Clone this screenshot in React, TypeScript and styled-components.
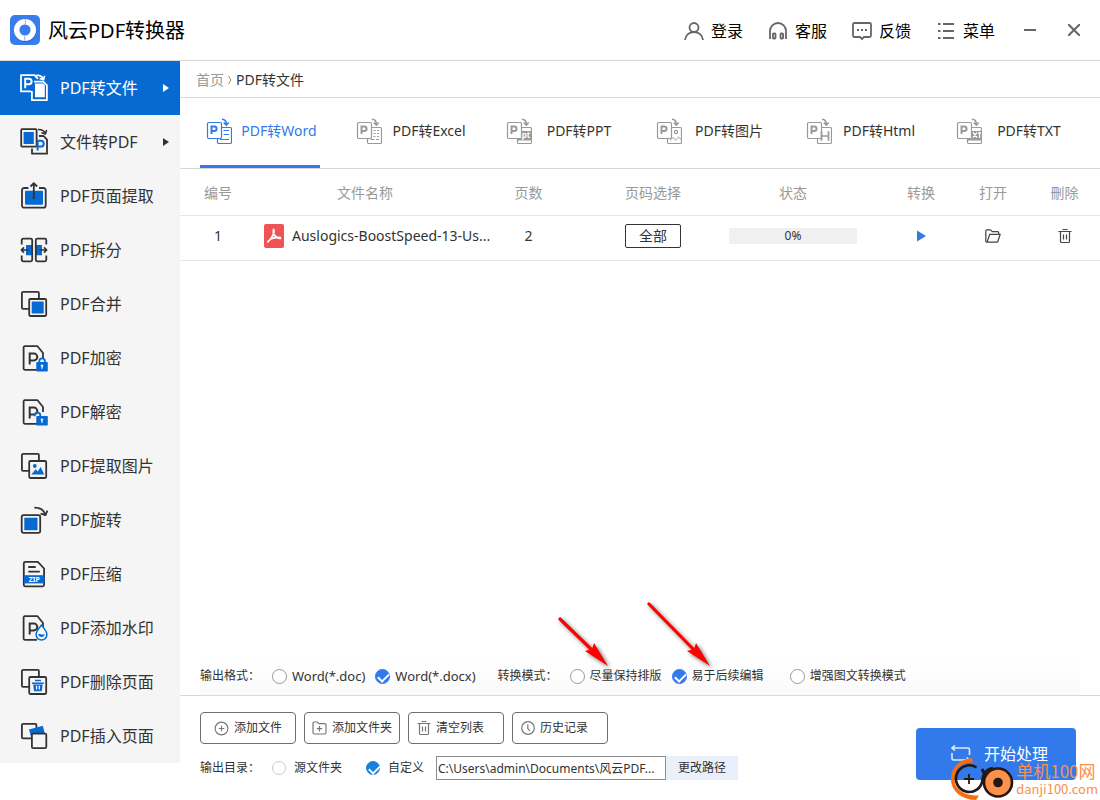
import React from "react";
import styled, { createGlobalStyle } from "styled-components";

const BLUE = "#327aeb";
const DEEP = "#066ad2";
const INK = "#333333";
const SIDE = "#f5f5f5";
const LINE = "#d9d9d9";

const Global = createGlobalStyle`
  * { box-sizing: border-box; }
  body {
    margin: 0;
    background: #fff;
    color: ${INK};
    font-family: "Noto Sans", "Noto Sans CJK SC", sans-serif;
    font-size: 14px;
    line-height: 20px;
  }
  button, input { font: inherit; color: inherit; }
  button { background: none; border: 0; padding: 0; cursor: pointer; }
  svg { display: block; flex: none; }
`;

const Window = styled.div`
  position: relative;
  min-height: 100vh;
  display: flex;
  flex-direction: column;
  overflow: hidden;
`;

const Header = styled.header`
  display: flex;
  align-items: center;
  height: 61px;
  padding: 0 4px 0 10px;
  border-bottom: 1px solid ${LINE};
`;

const Title = styled.h1`
  margin: 0 auto 0 8px;
  padding-top: 2px;
  font-size: 20px;
  font-weight: 400;
  line-height: 28px;
  color: #000;
`;

const HeaderNav = styled.nav`
  display: flex;
  gap: 25px;
  margin-right: 13px;
  padding-top: 2px;
`;

const HeaderButton = styled.button`
  display: flex;
  align-items: center;
  gap: 7px;
  font-size: 16px;
  line-height: 24px;
  color: #000;
`;

const WindowButton = styled.button`
  display: flex;
  align-items: center;
  justify-content: center;
  width: 44px;
  height: 40px;
`;

const Body = styled.div`
  flex: 1;
  display: flex;
  align-items: stretch;
`;

const Sidebar = styled.nav`
  align-self: flex-start;
  width: 180px;
  flex: none;
  background: ${SIDE};
`;

const SideItem = styled.button<{ $active?: boolean }>`
  display: flex;
  align-items: center;
  gap: 12px;
  width: 100%;
  height: 54px;
  padding: 0 11px 0 20px;
  font-size: 16px;
  line-height: 24px;
  text-align: left;
  color: ${(p) => (p.$active ? "#fff" : INK)};
  background: ${(p) => (p.$active ? DEEP : "transparent")};
`;

const SideLabel = styled.span`
  flex: 1;
  white-space: nowrap;
`;

const Main = styled.main`
  flex: 1;
  min-width: 0;
  display: flex;
  flex-direction: column;
`;

const Breadcrumb = styled.nav`
  display: flex;
  align-items: center;
  gap: 4px;
  height: 37px;
  padding: 1px 16px 0;
  border-bottom: 1px solid ${LINE};
`;

const CrumbLink = styled.a`
  color: #999;
  text-decoration: none;
`;

const Tabs = styled.div`
  display: flex;
  gap: 30px;
  height: 71px;
  padding: 0 20px;
  border-bottom: 1px solid ${LINE};
`;

const Tab = styled.button<{ $active?: boolean }>`
  display: flex;
  align-items: center;
  gap: 6px;
  width: 120px;
  flex: none;
  padding: 0 0 1px 6px;
  border-bottom: 3px solid ${(p) => (p.$active ? BLUE : "transparent")};
  color: ${(p) => (p.$active ? BLUE : INK)};
`;

const TabLabel = styled.span`
  flex: 1;
  text-align: center;
  white-space: nowrap;
`;

const FileTable = styled.table`
  width: 100%;
  table-layout: fixed;
  border-collapse: separate;
  border-spacing: 0;
`;

const HeadCell = styled.th<{ $w?: number; $pl?: number; $pr?: number }>`
  width: ${(p) => (p.$w ? `${p.$w}px` : "auto")};
  height: 47px;
  padding: 2px ${(p) => p.$pr ?? 0}px 0 ${(p) => p.$pl ?? 0}px;
  border-bottom: 1px solid #e6e6e6;
  font-weight: 400;
  color: #999;
`;

const Cell = styled.td<{ $pl?: number; $pr?: number }>`
  height: 45px;
  padding: 0 ${(p) => p.$pr ?? 0}px 4px ${(p) => p.$pl ?? 0}px;
  border-bottom: 1px solid #e6e6e6;
  text-align: center;
`;

const FileName = styled.div`
  display: flex;
  align-items: center;
  gap: 8px;
  white-space: nowrap;
`;

const RangeButton = styled.button`
  display: block;
  width: 56px;
  height: 24px;
  margin: 0 auto;
  border: 1px solid ${INK};
  border-radius: 2px;
  line-height: 20px;
`;

const Progress = styled.div`
  width: 128px;
  height: 16px;
  margin: 0 auto;
  border-radius: 2px;
  background: #f0f0f0;
  font-size: 12px;
  line-height: 16px;
`;

const IconButton = styled.button`
  display: block;
  margin: 0 auto;
`;

const Options = styled.div`
  display: flex;
  align-items: center;
  height: 40px;
  margin: auto 20px 0;
  padding-top: 2px;
  background: linear-gradient(#fff, #fafafa);
  font-size: 12px;
`;

const OptionGroup = styled.div<{ $after: number }>`
  display: flex;
  align-items: center;
  gap: 10px;
  margin-right: ${(p) => p.$after}px;
`;

const GroupLabel = styled.span`
  width: 62px;
  white-space: nowrap;
`;

const Option = styled.label`
  position: relative;
  display: flex;
  align-items: center;
  gap: 5px;
  white-space: nowrap;
`;

const Radio = styled.input<{ $size: number; $tone: string; $ring: string }>`
  appearance: none;
  position: relative;
  flex: none;
  width: ${(p) => p.$size}px;
  height: ${(p) => p.$size}px;
  margin: 0;
  border: 1px solid ${(p) => p.$ring};
  border-radius: 50%;
  background: #fff;
  &:checked {
    border-color: ${(p) => p.$tone};
    background: ${(p) => p.$tone};
  }
  &:checked::after {
    content: "";
    position: absolute;
    left: 2px;
    top: 3px;
    width: 9px;
    height: 5px;
    border-left: 2px solid #fff;
    border-bottom: 2px solid #fff;
    transform: rotate(-45deg);
  }
`;

const Latin = styled.span`
  font-size: 13px;
`;

const Arrow = styled.svg`
  position: absolute;
  right: 54px;
  bottom: 20px;
  pointer-events: none;
  overflow: visible;
  filter: drop-shadow(2px 2px 2px rgba(0, 0, 0, 0.55));
`;

const Footer = styled.footer`
  display: flex;
  align-items: flex-start;
  justify-content: space-between;
  height: 105px;
  padding: 16px 24px 20px 20px;
  border-top: 1px solid ${LINE};
  font-size: 12px;
`;

const FooterRow = styled.div`
  display: flex;
  align-items: center;
  gap: 8px;
  margin-bottom: 12px;
`;

const ToolButton = styled.button<{ $start?: boolean }>`
  display: flex;
  align-items: center;
  justify-content: ${(p) => (p.$start ? "flex-start" : "center")};
  gap: 5px;
  width: 96px;
  height: 32px;
  padding: 0 ${(p) => (p.$start ? 8 : 0)}px;
  border: 1px solid #707070;
  border-radius: 4px;
  white-space: nowrap;
`;

const DirRow = styled.div`
  display: flex;
  align-items: center;
  height: 24px;
`;

const DirLabel = styled.span`
  width: 72px;
  white-space: nowrap;
`;

const DirOption = styled.label<{ $w: number }>`
  display: flex;
  align-items: center;
  gap: 8px;
  width: ${(p) => p.$w}px;
  white-space: nowrap;
`;

const PathInput = styled.input`
  width: 230px;
  height: 24px;
  padding: 0 1px;
  border: 1px solid #8c8c8c;
  background: #fff;
`;

const PathButton = styled.button`
  width: 72px;
  height: 24px;
  background: #e9f0fc;
`;

const StartButton = styled.button`
  display: flex;
  align-items: center;
  gap: 13px;
  width: 160px;
  height: 52px;
  margin-top: 16px;
  padding-left: 35px;
  border-radius: 4px;
  background: ${BLUE};
  color: #fff;
  font-size: 16px;
  line-height: 24px;
`;

const Watermark = styled.div`
  position: absolute;
  right: 2px;
  bottom: 0;
  display: flex;
  align-items: center;
  gap: 1px;
  color: #f9904d;
  font-family: "Noto Sans CJK SC", sans-serif;
  pointer-events: none;
`;

const WatermarkText = styled.div`
  display: flex;
  flex-direction: column;
  padding-bottom: 1px;
  font-size: 13px;
  line-height: 16px;
`;

const WatermarkName = styled.span`
  font-size: 17px;
  line-height: 20px;
`;

/* ---------- sidebar icons, 28 x 28 ---------- */

const Side = ({ children, color = INK }: { children: React.ReactNode; color?: string }) => (
  <svg width="28" height="28" viewBox="0 0 28 28" fill="none" stroke={color} strokeWidth="1.8" strokeLinejoin="round" aria-hidden="true">
    {children}
  </svg>
);

const BackSheet = () => <rect x="1.9" y="1.9" width="17" height="17" rx="1.2" />;
const FrontSheet = () => <rect x="9.2" y="9" width="17" height="17" rx="1.2" fill={SIDE} />;
const Paper = () => <path d="M23 14V9L17.5 2.2H4.8a1.2 1.2 0 0 0-1.2 1.2v21.2a1.2 1.2 0 0 0 1.2 1.2H17" />;
const LetterP = () => <path d="M9.7 20.4V9.6h4.2a3.4 3.4 0 0 1 0 6.8H9.7" strokeWidth="2" strokeLinejoin="miter" />;

const sideIcons: Record<string, React.ReactNode> = {
  toFile: (
    <Side color="#fff">
      <path d="M11 17.4H1V1.2h13.5l3.4 3.6" />
      <path d="M5.2 14.3V4.7h3.6a2.7 2.7 0 0 1 0 5.6H5.2" strokeWidth="2" strokeLinejoin="miter" />
      <path d="M16 1.5c3.5-.4 6 .8 7.2 3.4M19.6 4.6l4 1.2 1-4" strokeWidth="1.6" />
      <path d="M11.9 17v9.2h15V11.4l-3.6-3.7H14" />
      <path d="M15 9.5h8.2l1.6 1.8v12H15z" fill="#fff" stroke="none" />
    </Side>
  ),
  fromFile: (
    <Side>
      <rect x="1.2" y="1.2" width="15.4" height="17.4" rx="1" />
      <rect x="3.6" y="4" width="10.2" height="12" fill={DEEP} stroke="none" />
      <path d="M18 1.5c3.5-.2 5.8 1 7 3.4M21.4 4.8l4 1.2 1.2-4" strokeWidth="1.6" />
      <path d="M12 20.5v5.2h15V11.6L23.6 8H19" />
      <path d="M17.6 22.6v-9.8h3.2a2.9 2.9 0 0 1 0 5.8h-3.2" stroke={DEEP} strokeWidth="2" strokeLinejoin="miter" />
    </Side>
  ),
  extract: (
    <Side>
      <rect x="5" y="8.7" width="18" height="14" rx="1" fill={DEEP} stroke="none" />
      <path d="M8.5 6H4.2A2.2 2.2 0 0 0 2 8.2v15.3a2.2 2.2 0 0 0 2.2 2.2h19.3a2.2 2.2 0 0 0 2.2-2.2V8.2A2.2 2.2 0 0 0 23.5 6H19M13.8 17V1.5M10.5 4.5l3.3-3.3 3.3 3.3" />
    </Side>
  ),
  split: (
    <Side>
      <path d="M6 9h6v10.2H6zM15.5 9H22v10.2h-6.5z" fill={DEEP} stroke="none" />
      <path d="M1.7 8.5V4.2a1.5 1.5 0 0 1 1.5-1.5h7.5a1.5 1.5 0 0 1 1.5 1.5v19.6a1.5 1.5 0 0 1-1.5 1.5H3.2a1.5 1.5 0 0 1-1.5-1.5v-4.3M26.3 8.5V4.2a1.5 1.5 0 0 0-1.5-1.5h-7.5a1.5 1.5 0 0 0-1.5 1.5v19.6a1.5 1.5 0 0 0 1.5 1.5h7.5a1.5 1.5 0 0 0 1.5-1.5v-4.3" />
      <path d="M8.5 14H1.5M4 11.3L1.3 14 4 16.7M19.5 14h7M24 11.3l2.7 2.7-2.7 2.7" strokeWidth="1.7" />
    </Side>
  ),
  merge: (
    <Side>
      <BackSheet />
      <FrontSheet />
      <rect x="11.7" y="11.5" width="12" height="12" fill={DEEP} stroke="none" />
    </Side>
  ),
  lock: (
    <Side>
      <Paper />
      <LetterP />
      <rect x="16.3" y="18" width="11.5" height="9.5" rx=".8" fill={DEEP} stroke="none" />
      <path d="M19.3 18.5v-1.3a2.8 2.8 0 0 1 5.6 0v1.3" stroke={DEEP} />
      <path d="M22 20.7v4M20.8 21.5h2.4" stroke="#fff" strokeWidth="1.3" />
    </Side>
  ),
  unlock: (
    <Side>
      <Paper />
      <LetterP />
      <rect x="16.3" y="18" width="11.5" height="9.5" rx=".8" fill={DEEP} stroke="none" />
      <path d="M14.7 18.2v-.8a2.8 2.8 0 0 1 5.6 0v1.3" stroke={DEEP} />
      <path d="M22 20.7v4M20.8 21.5h2.4" stroke="#fff" strokeWidth="1.3" />
    </Side>
  ),
  image: (
    <Side>
      <BackSheet />
      <FrontSheet />
      <circle cx="14.8" cy="14" r="1.9" fill={DEEP} stroke="none" />
      <path d="M11.3 22.5l4.4-5.3 2 2.2 3-4.4 3.6 7.5z" fill={DEEP} stroke="none" />
    </Side>
  ),
  rotate: (
    <Side>
      <rect x="1.7" y="9.2" width="18.5" height="17.6" rx="1.8" />
      <rect x="4.3" y="11.7" width="13.2" height="12.5" fill={DEEP} stroke="none" />
      <path d="M14.3 1.7c5 0 9.5 1.8 10.8 6.8M20.5 7.7l5 1.5L27.5 4.5" />
    </Side>
  ),
  zip: (
    <Side>
      <path d="M3.8 15V3.4a1.5 1.5 0 0 1 1.5-1.5h12.5l6.3 6.6V15M3.8 23v1.8a1.5 1.5 0 0 0 1.5 1.5h17.3a1.5 1.5 0 0 0 1.5-1.5V23M3.8 14v10M24.1 14v10M8.3 7h7.4M8.3 11.6h11.5" />
      <rect x="4" y="15.2" width="20.5" height="8.2" fill={DEEP} stroke="none" />
      <text x="14.2" y="21.9" textAnchor="middle" fontFamily="Noto Sans, sans-serif" fontSize="7" fontWeight="700" fill="#fff" stroke="none">ZIP</text>
    </Side>
  ),
  watermark: (
    <Side>
      <Paper />
      <LetterP />
      <path d="M21.5 11c2 3 5.4 6 5.4 9.6a5.4 5.4 0 0 1-10.8 0c0-3.6 3.4-6.6 5.4-9.6z" fill={SIDE} stroke={DEEP} strokeWidth="1.5" />
      <path d="M18.3 20.3c1.5-1 2.8 1 6.5 0a3.3 3.3 0 0 1-6.5 0z" fill={DEEP} stroke="none" />
    </Side>
  ),
  remove: (
    <Side>
      <BackSheet />
      <FrontSheet />
      <path d="M15 12.5h6M12 15.3h11.8" stroke={DEEP} strokeWidth="1.6" />
      <path d="M13.2 16.5h9.4l-.8 6.8h-7.8z" fill={DEEP} stroke="none" />
      <path d="M16.6 17.7v3.8M19.3 17.7v3.8" stroke="#fff" strokeWidth="1.2" />
    </Side>
  ),
  insert: (
    <Side>
      <rect x="1.9" y="1.9" width="14.5" height="14.5" rx="1.2" />
      <path d="M9 7.5L22.7 3.7l2.3 8-13.7 4z" fill={DEEP} stroke="none" />
      <rect x="11.9" y="11.6" width="14.4" height="14.6" rx="1.2" fill={SIDE} />
    </Side>
  ),
};

const sideItems: [string, string, boolean][] = [
  ["toFile", "PDF转文件", true],
  ["fromFile", "文件转PDF", true],
  ["extract", "PDF页面提取", false],
  ["split", "PDF拆分", false],
  ["merge", "PDF合并", false],
  ["lock", "PDF加密", false],
  ["unlock", "PDF解密", false],
  ["image", "PDF提取图片", false],
  ["rotate", "PDF旋转", false],
  ["zip", "PDF压缩", false],
  ["watermark", "PDF添加水印", false],
  ["remove", "PDF删除页面", false],
  ["insert", "PDF插入页面", false],
];

/* ---------- tab icons, 26 x 26 ---------- */

const TabIcon = ({ active, children }: { active?: boolean; children: React.ReactNode }) => {
  const c = active ? BLUE : "#999";
  return (
    <svg width="26" height="26" viewBox="0 0 26 26" fill="none" stroke={c} strokeWidth="1.2" color={c} aria-hidden="true">
      <rect x="1.5" y="4.5" width="14" height="16" rx="1.2" />
      <path d="M5.5 16V8.4h2.8a2.2 2.2 0 0 1 0 4.5H5.5" strokeWidth="2" />
      <path d="M16 1.3c2.8.2 4.3 1.9 4.4 5M17.8 4.6l2.6 2.6 2.3-2.8" strokeWidth="1.5" />
      <path d="M11.5 20.5v3.8a1.2 1.2 0 0 0 1.2 1.2h11.6a1.2 1.2 0 0 0 1.2-1.2V10.7a1.2 1.2 0 0 0-1.2-1.2H16" />
      {children}
    </svg>
  );
};

const tabs: [string, React.ReactNode][] = [
  ["PDF转Word", <path key="w" d="M17.5 12.5h5.5M17.5 16.5h5.5M14 21.5h9" />],
  ["PDF转Excel", <path key="e" d="M17.5 12.5h2M21 12.5h2M17.5 15.5h2M21 15.5h2M17.5 18.5h2M21 18.5h2M14.5 21.5h4M20 21.5h3" />],
  ["PDF转PPT", (
    <React.Fragment key="p">
      <path d="M16 13h9.5v9.5h-14v-2H16z" fill="currentColor" stroke="none" />
      <text x="20" y="20" textAnchor="middle" fontFamily="Noto Sans, sans-serif" fontSize="8" fontWeight="700" fill="#fff" stroke="none">pt</text>
    </React.Fragment>
  )],
  ["PDF转图片", (
    <React.Fragment key="i">
      <circle cx="20" cy="14" r="1.6" />
      <path d="M14 22.5l3-3 2.5 2.5 3-3 2.5 2.5" opacity=".6" />
    </React.Fragment>
  )],
  ["PDF转Html", <path key="h" d="M15.5 22.8v-9.6M22.5 22.8v-9.6M15.5 18h7" strokeWidth="1.7" />],
  ["PDF转TXT", (
    <React.Fragment key="t">
      <path d="M16 13h9.5v9.5h-14v-2H16z" fill="currentColor" stroke="none" />
      <path d="M17 14.5l4 5M21 14.5l-4 5M22 15h3M23.5 15v5" stroke="#fff" strokeWidth="1.3" />
    </React.Fragment>
  )],
];

/* ---------- other drawings ---------- */

const Logo = () => (
  <svg width="30" height="30" viewBox="0 0 30 30" aria-hidden="true">
    <rect width="30" height="30" rx="5" fill="#397dec" />
    <circle cx="15.5" cy="16" r="8.5" fill="none" stroke="#2b66cc" strokeWidth="5" />
    <circle cx="15" cy="15" r="8.3" fill="none" stroke="#fff" strokeWidth="5.5" />
    <path d="M15.3 4v5M14.7 21v5" stroke="#8fb6f5" strokeWidth="1" />
  </svg>
);

const GREY = "#666";

const headerItems: [string, React.ReactNode][] = [
  ["登录", <><circle cx="10" cy="6.5" r="4.5" /><path d="M1 19c.3-5 4.5-8 9-8s8.7 3 9 8" /></>],
  ["客服", <><path d="M2 18V10a8 8 0 0 1 16 0v8" /><rect x="4.9" y="12.5" width="2.6" height="5" rx=".8" /><rect x="12.5" y="12.5" width="2.6" height="5" rx=".8" /></>],
  ["反馈", <><path d="M2.5 2h15A1.5 1.5 0 0 1 19 3.5v11a1.5 1.5 0 0 1-1.5 1.5H12l-2 2-2-2H2.5A1.5 1.5 0 0 1 1 14.5v-11A1.5 1.5 0 0 1 2.5 2z" /><path d="M5 9h2M9 9h2M13 9h2" /></>],
  ["菜单", <path key="m" d="M2 3h2.5M2 10h2.5M2 17h2.5M7 3h11M7 10h11M7 17h11" />],
];

const Caret = ({ color }: { color: string }) => (
  <svg width="6" height="8" viewBox="0 0 6 8" fill={color} aria-hidden="true"><path d="M0 0v8l6-4z" /></svg>
);

const TrashIcon = ({ color }: { color: string }) => (
  <svg width="14" height="16" viewBox="0 0 14 16" fill="none" stroke={color} strokeWidth="1.2" aria-hidden="true">
    <path d="M.5 3.5h13M4.5 1.5h5M2.5 3.5v10.1a1 1 0 0 0 1 .9h7a1 1 0 0 0 1-.9V3.5M5.5 6.5v5M8.5 6.5v5" />
  </svg>
);

const RedArrow = ({ w, h }: { w: number; h: number }) => (
  <Arrow width={w} height={h} viewBox={`0 0 ${w} ${h}`} aria-hidden="true">
    <path d={`M2 2L${w - 14} ${h - 14}`} stroke="#f00" strokeWidth="3.2" strokeLinecap="round" />
    <path d={`M${w} ${h}L${w - 23} ${h - 15}L${w - 16} ${h - 17}L${w - 14} ${h - 23}z`} fill="#f00" />
  </Arrow>
);

export default function App() {
  return (
    <>
      <Global />
      <Window>
        <Header>
          <Logo />
          <Title>风云PDF转换器</Title>
          <HeaderNav>
            {headerItems.map(([label, icon]) => (
              <HeaderButton key={label}>
                <svg width="20" height="20" viewBox="0 0 20 20" fill="none" stroke={GREY} strokeWidth="1.8" aria-hidden="true">{icon}</svg>
                {label}
              </HeaderButton>
            ))}
          </HeaderNav>
          <WindowButton aria-label="最小化">
            <svg width="12" height="12" viewBox="0 0 12 12" stroke={GREY} strokeWidth="2"><path d="M0 6h12" /></svg>
          </WindowButton>
          <WindowButton aria-label="关闭">
            <svg width="12" height="12" viewBox="0 0 12 12" stroke={GREY} strokeWidth="2"><path d="M0 0l12 12M12 0L0 12" /></svg>
          </WindowButton>
        </Header>

        <Body>
          <Sidebar>
            {sideItems.map(([icon, label, more], i) => (
              <SideItem key={icon} $active={i === 0}>
                {sideIcons[icon]}
                <SideLabel>{label}</SideLabel>
                {more && <Caret color={i === 0 ? "#fff" : INK} />}
              </SideItem>
            ))}
          </Sidebar>

          <Main>
            <Breadcrumb>
              <CrumbLink href="#home">首页</CrumbLink>
              <svg width="4" height="10" viewBox="0 0 4 10" fill="none" stroke="#888" aria-hidden="true"><path d="M.5 1l2.5 4L.5 9" /></svg>
              <span>PDF转文件</span>
            </Breadcrumb>

            <Tabs role="tablist">
              {tabs.map(([label, art], i) => (
                <Tab key={label} role="tab" aria-selected={i === 0} $active={i === 0}>
                  <TabIcon active={i === 0}>{art}</TabIcon>
                  <TabLabel>{label}</TabLabel>
                </Tab>
              ))}
            </Tabs>

            <FileTable>
              <thead>
                <tr>
                  <HeadCell $w={76}>编号</HeadCell>
                  <HeadCell $pr={26}>文件名称</HeadCell>
                  <HeadCell $w={85} $pr={28}>页数</HeadCell>
                  <HeadCell $w={136}>页码选择</HeadCell>
                  <HeadCell $w={144}>状态</HeadCell>
                  <HeadCell $w={92} $pl={20}>转换</HeadCell>
                  <HeadCell $w={72}>打开</HeadCell>
                  <HeadCell $w={71}>刪除</HeadCell>
                </tr>
              </thead>
              <tbody>
                <tr>
                  <Cell>1</Cell>
                  <Cell $pl={8}>
                    <FileName>
                      <svg width="20" height="24" viewBox="0 0 20 24" aria-hidden="true">
                        <rect width="20" height="24" rx="2" fill="#f05354" />
                        <path d="M9.5 5.5c1.8 1.6-.6 7.5-5.7 12.5M9.5 6c-1.2 2.5 1.5 8.500 7 8.300M4 17.500c2.500-3 7.500-4.300 12.300-4" fill="none" stroke="#fff" strokeWidth="1.700" strokeLinecap="round" />
                      </svg>
                      Auslogics-BoostSpeed-13-Us...
                    </FileName>
                  </Cell>
                  <Cell $pr={28}>2</Cell>
                  <Cell><RangeButton>全部</RangeButton></Cell>
                  <Cell><Progress>0%</Progress></Cell>
                  <Cell $pl={20}>
                    <IconButton aria-label="转换">
                      <svg width="10" height="12" viewBox="0 0 10 12" fill={BLUE}><path d="M1 .5v11L10 6z" /></svg>
                    </IconButton>
                  </Cell>
                  <Cell>
                    <IconButton aria-label="打开">
                      <svg width="16" height="14" viewBox="0 0 16 14" fill="none" stroke="#444" strokeWidth="1.200" strokeLinejoin="round">
                        <path d="M2 13.200a1.200 1.200 0 0 1-1.200-1.200V2A1.200 1.200 0 0 1 2 .8h3.500L7.200 2.600h5.300a1.200 1.200 0 0 1 1.200 1.200v1.500M2 13.200h10.500L15.200 5.300H4.800z" />
                      </svg>
                    </IconButton>
                  </Cell>
                  <Cell><IconButton aria-label="刪除"><TrashIcon color="#444" /></IconButton></Cell>
                </tr>
              </tbody>
            </FileTable>

            <Options>
              <OptionGroup $after={22} role="radiogroup" aria-label="输出格式">
                <GroupLabel>输出格式：</GroupLabel>
                <Option>
                  <Radio type="radio" name="format" $size={15} $tone={BLUE} $ring="#999" />
                  <Latin>Word(*.doc)</Latin>
                </Option>
                <Option>
                  <Radio type="radio" name="format" defaultChecked $size={15} $tone={BLUE} $ring="#999" />
                  <Latin>Word(*.docx)</Latin>
                </Option>
              </OptionGroup>
              <OptionGroup $after={26} role="radiogroup" aria-label="转换模式">
                <GroupLabel>转换模式：</GroupLabel>
                <Option>
                  <Radio type="radio" name="mode" $size={15} $tone={BLUE} $ring="#999" />
                  尽量保持排版
                  <RedArrow w={50} h={49} />
                </Option>
                <Option>
                  <Radio type="radio" name="mode" defaultChecked $size={15} $tone={BLUE} $ring="#999" />
                  易于后续编辑
                  <RedArrow w={63} h={64} />
                </Option>
              </OptionGroup>
              <Option>
                <Radio type="radio" name="mode" $size={15} $tone={BLUE} $ring="#999" />
                增强图文转换模式
              </Option>
            </Options>

            <Footer>
              <div>
                <FooterRow>
                  <ToolButton>
                    <svg width="15" height="15" viewBox="0 0 16 16" fill="none" stroke="#777" strokeWidth="1.200" aria-hidden="true"><circle cx="8" cy="8" r="6.800" /><path d="M8 5v6M5 8h6" /></svg>
                    添加文件
                  </ToolButton>
                  <ToolButton>
                    <svg width="15" height="14" viewBox="0 0 15 14" fill="none" stroke="#777" strokeWidth="1.200" aria-hidden="true"><path d="M1 11.800V2.200A1.200 1.200 0 0 1 2.200 1h3L7 2.700h5.800A1.200 1.200 0 0 1 14 3.900v7.900a1.200 1.200 0 0 1-1.200 1.200H2.200A1.200 1.200 0 0 1 1 11.800zM7.500 5v5.500M4.800 7.700h5.400" /></svg>
                    添加文件夹
                  </ToolButton>
                  <ToolButton $start><TrashIcon color="#777" />清空列表</ToolButton>
                  <ToolButton $start>
                    <svg width="14" height="14" viewBox="0 0 14 14" fill="none" stroke="#777" strokeWidth="1.200" aria-hidden="true"><circle cx="7" cy="7" r="6.300" /><path d="M6.800 3.500v4l2 2.500" /></svg>
                    历史记录
                  </ToolButton>
                </FooterRow>
                <DirRow>
                  <DirLabel>输出目录：</DirLabel>
                  <DirOption $w={94}>
                    <Radio type="radio" name="dir" $size={14} $tone="#1780dc" $ring="#ccc" />
                    源文件夹
                  </DirOption>
                  <DirOption $w={70}>
                    <Radio type="radio" name="dir" defaultChecked $size={14} $tone="#1780dc" $ring="#ccc" />
                    自定义
                  </DirOption>
                  <PathInput readOnly aria-label="输出目录" defaultValue="C:\Users\admin\Documents\风云PDF..." />
                  <PathButton>更改路径</PathButton>
                </DirRow>
              </div>
              <StartButton>
                <svg width="20" height="18" viewBox="0 0 20 18" fill="none" stroke="#fff" strokeWidth="1.600" opacity=".85" aria-hidden="true">
                  <path d="M4 .5L1 3l3 2.500M1.500 3H17a1.500 1.500 0 0 1 1.500 1.500V10M1 8v5.500A1.500 1.500 0 0 0 2.500 15H18M15.500 12.500l3 2.500-3 2.500" />
                </svg>
                开始处理
              </StartButton>
            </Footer>
          </Main>
        </Body>

        <Watermark>
          <svg width="64" height="42" viewBox="0 0 64 42" fill="none" aria-hidden="true">
            <path d="M21 0C8 1 0 10 0 21s9 20.500 25 21l3-4.500C14 38 3.500 32 3.500 21S11 4.500 22 4.500z" fill="#f96d0e" />
            <path d="M25.500 9.500A13.300 13.300 0 1 0 31.500 22C32 15 36 10.500 42 10" stroke="#231815" strokeWidth="2.600" />
            <path d="M31 11l4 8" stroke="#231815" strokeWidth="3" />
            <circle cx="47" cy="24.500" r="14" fill="#fd914c" stroke="#231815" strokeWidth="2.600" />
            <circle cx="47" cy="24.500" r="4.800" fill="#231815" />
            <path d="M13 21h10M18 16v10" stroke="#231815" strokeWidth="1.800" />
          </svg>
          <WatermarkText>
            <WatermarkName>单机100网</WatermarkName>
            <span>danji100.com</span>
          </WatermarkText>
        </Watermark>
      </Window>
    </>
  );
}
